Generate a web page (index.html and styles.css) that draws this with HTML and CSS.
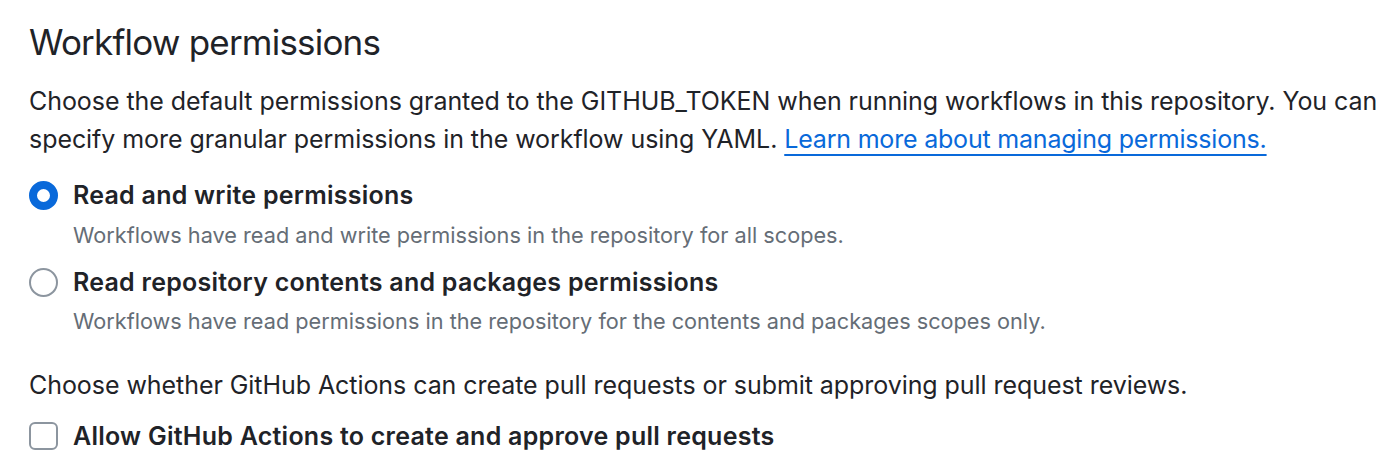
FILE: index.html
```html
<!DOCTYPE html>
<html lang="en">
<head>
<meta charset="utf-8">
<title>Workflow permissions</title>
<link rel="stylesheet" href="styles.css">
</head>
<body>
<main class="section">
  <h2 class="heading">Workflow permissions</h2>
  <p class="intro">Choose the default permissions granted to the GITHUB_TOKEN when running workflows in this repository. You can specify more granular permissions in the workflow using YAML. <a class="link" href="#">Learn more about managing permissions.</a></p>

  <div class="options">
    <label class="option">
      <span class="radio radio-checked"></span>
      <span class="option-text">
        <span class="option-label">Read and write permissions</span>
        <span class="option-note">Workflows have read and write permissions in the repository for all scopes.</span>
      </span>
    </label>
    <label class="option">
      <span class="radio"></span>
      <span class="option-text">
        <span class="option-label">Read repository contents and packages permissions</span>
        <span class="option-note">Workflows have read permissions in the repository for the contents and packages scopes only.</span>
      </span>
    </label>
  </div>

  <p class="intro intro-second">Choose whether GitHub Actions can create pull requests or submit approving pull request reviews.</p>

  <label class="option option-check">
    <span class="checkbox"></span>
    <span class="option-label">Allow GitHub Actions to create and approve pull requests</span>
  </label>
</main>
</body>
</html>
```

FILE: styles.css
```css
* { box-sizing: border-box; }

html, body {
  margin: 0;
  padding: 0;
  background: #ffffff;
}

body {
  font-family: Inter, "Noto Sans", "Liberation Sans", sans-serif;
  color: #1f2328;
}

.section {
  padding: 18px 0 0 29px;
  width: 1400px;
}

.heading {
  margin: 0;
  font-size: 35px;
  line-height: 48px;
  letter-spacing: -0.8px;
  font-weight: 400;
  color: #1f2328;
}

.intro {
  margin: 17px 0 0 0;
  font-size: 25px;
  line-height: 37.5px;
  letter-spacing: -0.06px;
  color: #1f2328;
}

.intro-second {
  margin-top: 30px;
}

.link {
  color: #0969da;
  letter-spacing: -0.2px;
  text-decoration: underline;
  text-decoration-skip-ink: none;
  text-underline-offset: 6px;
  text-decoration-thickness: 1.5px;
}

.options {
  display: flex;
  flex-direction: column;
  gap: 13px;
  margin-top: 19px;
}

.option {
  display: flex;
  align-items: flex-start;
  gap: 15px;
}

.option-text {
  display: flex;
  flex-direction: column;
  gap: 5.5px;
}

.option-label {
  font-size: 25px;
  line-height: 36px;
  letter-spacing: 0.25px;
  font-weight: 600;
  color: #1f2328;
}

.option-note {
  font-size: 21.7px;
  line-height: 32px;
  color: #656d76;
}

.radio {
  flex: none;
  width: 29px;
  height: 29px;
  margin-top: 4px;
  border-radius: 50%;
  border: 2px solid #8c959f;
  background: #ffffff;
}

.radio-checked {
  border: 8.5px solid #0969da;
}

.option-check {
  margin-top: 13px;
}

.checkbox {
  flex: none;
  width: 29px;
  height: 28px;
  margin-top: 4px;
  border-radius: 6px;
  border: 2px solid #8c959f;
  background: #ffffff;
}
```
